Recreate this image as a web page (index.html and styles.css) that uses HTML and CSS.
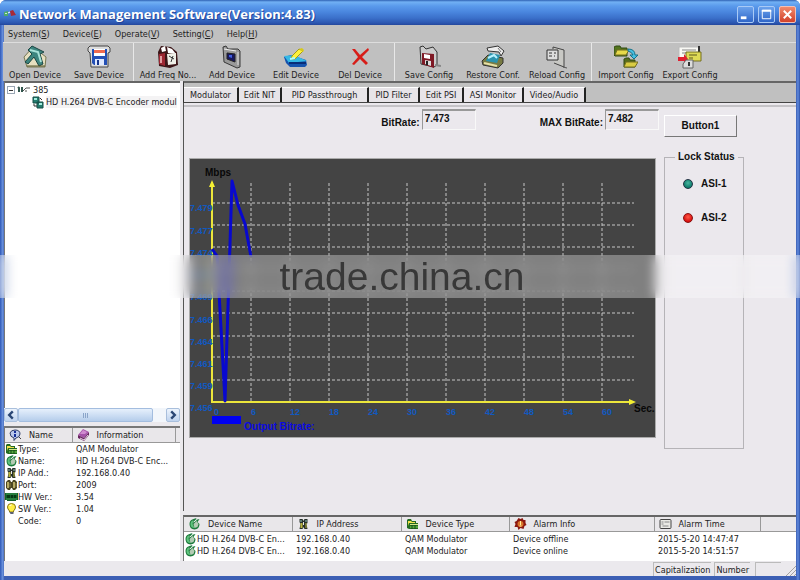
FILE: index.html
```html
<!DOCTYPE html>
<html lang="en">
<head>
<meta charset="utf-8">
<title>Network Management Software(Version:4.83)</title>
<link rel="stylesheet" href="styles.css">
</head>
<body>
<svg class="defs" aria-hidden="true">
  <symbol id="leaf" viewBox="0 0 12 12"><path d="M1 6Q1 2 5 1L8 0 7 2 11 1 9 4 11 6Q11 11 6 11.500Q1 11 1 6Z" fill="#1d7a3c"/><path d="M2 6Q2 3 5 2L4 6 6 10Q2 10 2 6Z" fill="#5fc27d"/><path d="M5 6L8 3 10 6 9 9 6 10Z" fill="#b5cbb5"/><path d="M5 4L8 2" stroke="#fff"/></symbol>
  <symbol id="hosts" viewBox="0 0 12 12"><path d="M2 1H5L6 3 7 1H10V5L9 6 10 11H7L6 9 5 11H2L3 6 2 4Z" fill="#26302a"/><path d="M3 2H4V4H3ZM8 2H9V4H8Z" fill="#8fc0b4"/><path d="M3 5H5V10H3ZM8 5H9V10H8Z" fill="#b9b43c"/><path d="M6 4V7" stroke="#e8e8e8"/></symbol>
  <symbol id="folder" viewBox="0 0 13 12"><path d="M1 10V2L2 1H5L6 3H10V5H12V11H3Z" fill="#246b22"/><path d="M2 3H5L6 4H9V5H3L2 8Z" fill="#f2e04a"/><path d="M4 6H12V7H4Z" fill="#d5e68a"/><path d="M4 8H12V10H4Z" fill="#55a53c"/><path d="M6 7V11M9 7V11" stroke="#174d18"/></symbol>
  <symbol id="plug" viewBox="0 0 13 12"><path d="M1 3L3 1H5L6 3H7L8 1H10L12 3V9L10 11H8L7 9H6L5 11H3L1 9Z" fill="#4c4522"/><path d="M2 3H4V9H2ZM8 3H10V9H8Z" fill="#b6aa63"/><path d="M5 4V8M11 4V8" stroke="#8c8245"/></symbol>
  <symbol id="board" viewBox="0 0 13 12"><path d="M0 2H13V9H11V10H2V9H0Z" fill="#12602a"/><path d="M2 4H5V7H2ZM6 4H8V7H6ZM9 4H11V7H9Z" fill="#063713"/><path d="M1 3H12M1 8H12" stroke="#3e9b50"/></symbol>
  <symbol id="bulb" viewBox="0 0 12 12"><path d="M6 .5Q10 .5 10 4Q10 6 8 8V9H4V8Q2 6 2 4Q2 .5 6 .5Z" fill="#ffee45" stroke="#8b7a14"/><path d="M4 3Q4 2 6 2" stroke="#fff" fill="none"/><path d="M4 9H8V11H5Z" fill="#5c6272"/></symbol>
  <symbol id="info" viewBox="0 0 13 12"><path d="M1 4Q2 1 6 1Q11 1 11 5Q11 8 7 9L5 11.500 5 9Q1 8 1 4Z" fill="#b9c7ea" stroke="#303d68"/><path d="M6 2V4M6 5V8" stroke="#142d98" stroke-width="2"/><path d="M10 8L12 10" stroke="#444"/></symbol>
  <symbol id="book" viewBox="0 0 13 12"><path d="M1 6L6 0 12 3 7 9Z" fill="#a553a9"/><path d="M3 5L6 1 10 3 8 5Z" fill="#d08bd0"/><path d="M1 6L7 9 12 3V6L7 12 1 9Z" fill="#68245f"/><path d="M3 9L7 11 11 6" stroke="#eadce9" fill="none"/></symbol>
  <symbol id="alert" viewBox="0 0 12 12"><path d="M4 0L6 1 8 0 9 2 11 2 11 5 12 7 10 8 9 11 6 10 4 12 3 9 0 9 1 6 0 4 2 3Z" fill="#8a1710"/><circle cx="6" cy="6" r="3" fill="#d9742a"/><path d="M6 3V7M5 8H7" stroke="#fff099"/></symbol>
  <symbol id="card" viewBox="0 0 12 12"><rect x=".5" y="1.500" width="11" height="9" rx="1" fill="#e9e9e4" stroke="#444"/><path d="M2 4H4M5 4H10M2 6H4M3 8H9" stroke="#888"/></symbol>
</svg>

<div class="window">
  <header class="titlebar">
    <svg class="app-icon" viewBox="0 0 12 10" aria-hidden="true"><path d="M0 3L4 2V7H0Z" fill="#4ea96b"/><path d="M1 4H3V5H1Z" fill="#c5ecd1"/><path d="M6 2L9 1 12 6 7 7Z" fill="#a92a37"/><path d="M4 4L6 3" stroke="#fff"/></svg>
    <h1>Network Management Software(Version:4.83)</h1>
    <div class="caption-buttons">
      <button type="button" aria-label="Minimize"><svg viewBox="0 0 16 16"><path d="M3 11.500H9" stroke="#fff" stroke-width="3"/></svg></button>
      <button type="button" aria-label="Maximize"><svg viewBox="0 0 16 16"><path d="M3.500 3.500H12.500V12.500H3.500Z" stroke="#fff" fill="none"/><path d="M3 4H13" stroke="#fff" stroke-width="2"/></svg></button>
      <button type="button" class="close" aria-label="Close"><svg viewBox="0 0 16 16"><path d="M4 4L12 12M12 4L4 12" stroke="#fff" stroke-width="2"/></svg></button>
    </div>
  </header>

  <nav class="menubar">
    <button type="button">System(<u>S</u>)</button>
    <button type="button">Device(<u>E</u>)</button>
    <button type="button">Operate(<u>V</u>)</button>
    <button type="button">Setting(<u>C</u>)</button>
    <button type="button">Help(<u>H</u>)</button>
  </nav>

  <div class="toolbar">
    <button type="button"><svg viewBox="0 0 24 24"><path d="M1 12L10 2 23 12 22 22H4Z" fill="#e6dfc0" stroke="#777752"/><path d="M5 5L9 1 21 7 17 9 20 19 16 21 11 12 5 19 2 17 9 9Z" fill="#3d857f" stroke="#1b4644"/><path d="M7 5L15 7 18 17" stroke="#a9e1d8" stroke-width="2" fill="none"/><path d="M4 21H22" stroke="#55552b"/></svg>Open Device</button>
    <button type="button"><svg viewBox="0 0 24 24"><path d="M1 3L3 1H21L23 3V7L21 8V22H4L3 8 1 6Z" fill="#ddd" stroke="#444"/><path d="M5 4H20V20H7L5 18Z" fill="#2450b5"/><path d="M7 4H18V11H7Z" fill="#fff"/><path d="M7 5H18V8H7Z" fill="#f06b4f"/><path d="M8 14H17V20H8Z" fill="#dfe9ff"/><path d="M10 15H12V20H10Z" fill="#16358c"/></svg>Save Device</button>
    <span class="separator"></span>
    <button type="button"><svg viewBox="0 0 24 24"><path d="M2 7L5 1 15 2 21 7 22 20 14 23 3 21Z" fill="#3b1517"/><path d="M5 3L9 1 10 6 6 7ZM11 2L16 4 20 9 12 8Z" fill="#fff"/><path d="M11 9L20 8 20 19 12 20Z" fill="#efefe7"/><path d="M3 9L9 8 9 21 3 19Z" fill="#9c2631"/><path d="M5 11V18" stroke="#df9da0" stroke-width="2"/><path d="M13 11L18 14M17 11L15 17" stroke="#333"/></svg>Add Freq No...</button>
    <button type="button"><svg viewBox="0 0 24 24"><path d="M3 2L6 1 8 4 18 4 20 6V22L17 23 4 17Z" fill="#999" stroke="#383838"/><path d="M7 8L15 9V17L7 14Z" fill="#17175e" stroke="#222"/><path d="M9 10L12 10V13L9 12Z" fill="#3f5ee0"/><path d="M18 7V20" stroke="#ddd"/><path d="M4 4L16 6" stroke="#eee"/></svg>Add Device</button>
    <button type="button"><svg viewBox="0 0 24 24"><path d="M0 12L7 10 22 15 23 20 21 22 6 22 2 18Z" fill="#1553ae"/><path d="M0 11L10 10 23 16 5 18Z" fill="#35b9e5"/><path d="M5 18H22" stroke="#082d78" stroke-width="2"/><path d="M8 11L15 4 19 6 11 14 7 14Z" fill="#fff13b" stroke="#a49b19"/><path d="M15 4L18 3 20 5 19 7Z" fill="#d6c91b"/><path d="M6 14L11 13" stroke="#aafaff" stroke-width="2"/></svg>Edit Device</button>
    <button type="button"><svg viewBox="0 0 24 24"><path d="M4 4L7 4 12 10 20 3 21 5 14 12 20 18 18 20 12 14 6 20 4 19 10 12Z" fill="#d71d18"/></svg>Del Device</button>
    <span class="separator"></span>
    <button type="button"><svg viewBox="0 0 24 24"><path d="M3 2L6 1 9 4 16 2 20 7V20L17 22 4 19Z" fill="#ccc" stroke="#333"/><path d="M5 8L17 9V23L5 19Z" fill="#7f1925"/><path d="M7 9L13 10V14L7 13Z" fill="#fff"/><path d="M8 15L14 16V21L8 19Z" fill="#ddd"/><path d="M10 16V20" stroke="#222" stroke-width="2"/><path d="M18 20L24 21" stroke="#888" stroke-width="2"/></svg>Save Config</button>
    <button type="button"><svg viewBox="0 0 24 24"><path d="M6 3L17 1 23 6 20 11 18 7 7 6Z" fill="#eee" stroke="#333"/><path d="M17 3L20 7" fill="none" stroke="#777"/><path d="M1 16L7 10 22 13 22 18 17 23 2 20Z" fill="#777a43" stroke="#333"/><path d="M6 14L9 8 19 10 16 18 5 16Z" fill="#2b93ae"/><path d="M7 13L13 10 16 13" stroke="#b7f2ff" stroke-width="2" fill="none"/><path d="M3 18L16 21" stroke="#e7e0a6" stroke-width="2"/></svg>Restore Conf.</button>
    <button type="button"><svg viewBox="0 0 24 24"><path d="M8 4V2L19 5V22L9 18" fill="#c8c8c4" stroke="#444"/><path d="M2 5H13V15H2Z" fill="#ddd" stroke="#333"/><path d="M4 8H7M9 8H11M4 11H7M9 11H10" stroke="#333"/><path d="M18 22L22 23" stroke="#555"/></svg>Reload Config</button>
    <span class="separator"></span>
    <button type="button"><svg viewBox="0 0 24 24"><path d="M0 10V2L2 1H6L7 3H13V11H1Z" fill="#54751e" stroke="#304b13"/><path d="M3 5H15L12 10H1Z" fill="#e7da4b" stroke="#746e20"/><path d="M10 22V14L12 13H15L16 15H21V22Z" fill="#566d1c" stroke="#304b13"/><path d="M12 17H24L21 22H10Z" fill="#d9cc42" stroke="#746e20"/><path d="M14 4Q21 4 21 10H24L20 14 16 10H19Q18 7 14 6Z" fill="#47bfe2" stroke="#167289"/></svg>Import Config</button>
    <button type="button"><svg viewBox="0 0 24 24"><path d="M1 2H22V13H1Z" fill="#f8f8f4" stroke="#bbb"/><path d="M4 5H18M4 8H9" stroke="#888"/><path d="M21 1V16" stroke="#333" stroke-width="2"/><path d="M8 7H23V16H8Z" fill="#dfda55" stroke="#746f20"/><path d="M11 10H19M11 13H15" stroke="#5b5721"/><path d="M0 12H6V9L10 14 6 19V16H0Z" fill="#e02030"/><path d="M8 15H15V23H5V19Z" fill="#ddd" stroke="#666"/><path d="M11 17V21" stroke="#333" stroke-width="2"/></svg>Export Config</button>
  </div>

  <main class="workspace">
    <aside class="sidebar">
      <div class="tree">
        <ul>
          <li class="root"><button type="button" class="expander" aria-label="Collapse 385"></button>
            <svg viewBox="0 0 14 10" aria-hidden="true"><path d="M1 2L2 3V7M5 2V7" stroke="#31564d" stroke-width="2" fill="none"/><path d="M6 6L9 3H13M8 6H10" stroke="#555" fill="none"/></svg><span>385</span></li>
          <li class="leaf"><svg viewBox="0 0 12 13" aria-hidden="true"><path d="M1 1H7V7H1ZM5 6H11V12H5Z" fill="#247c6e" stroke="#164d46"/><path d="M2 3H5M7 8H10" stroke="#a3eee0" stroke-width="2"/><path d="M2 8V10H5M8 2L10 4" stroke="#333" fill="none"/></svg><span>HD H.264 DVB-C Encoder modul</span></li>
        </ul>
      </div>
      <div class="scrollbar">
        <button type="button" aria-label="Scroll left"><svg viewBox="0 0 10 10"><path d="M6.500 2L3.500 5L6.500 8" /></svg></button>
        <div class="track"><div class="thumb"><i></i><i></i><i></i></div></div>
        <button type="button" aria-label="Scroll right"><svg viewBox="0 0 10 10"><path d="M3.500 2L6.500 5L3.500 8" /></svg></button>
      </div>
      <div class="details">
        <table>
          <colgroup><col class="c-key"><col class="c-val"><col></colgroup>
          <thead><tr><th><span><svg><use href="#info"/></svg>Name</span></th><th><span><svg><use href="#book"/></svg>Information</span></th><th></th></tr></thead>
          <tbody>
            <tr><td><span><svg><use href="#folder"/></svg>Type:</span></td><td>QAM Modulator</td><td></td></tr>
            <tr><td><span><svg><use href="#leaf"/></svg>Name:</span></td><td>HD H.264 DVB-C Enc...</td><td></td></tr>
            <tr><td><span><svg><use href="#hosts"/></svg>IP Add.:</span></td><td>192.168.0.40</td><td></td></tr>
            <tr><td><span><svg><use href="#plug"/></svg>Port:</span></td><td>2009</td><td></td></tr>
            <tr><td><span><svg><use href="#board"/></svg>HW Ver.:</span></td><td>3.54</td><td></td></tr>
            <tr><td><span><svg><use href="#bulb"/></svg>SW Ver.:</span></td><td>1.04</td><td></td></tr>
            <tr><td><span><svg></svg>Code:</span></td><td>0</td><td></td></tr>
          </tbody>
        </table>
      </div>
    </aside>

    <section class="content">
      <div class="tabs" role="tablist">
        <button type="button" role="tab">Modulator</button>
        <button type="button" role="tab">Edit NIT</button>
        <button type="button" role="tab">PID Passthrough</button>
        <button type="button" role="tab">PID Filter</button>
        <button type="button" role="tab">Edit PSI</button>
        <button type="button" role="tab" aria-selected="true">ASI Monitor</button>
        <button type="button" role="tab">Video/Audio</button>
      </div>
      <div class="page" role="tabpanel">
        <form class="rates">
          <div class="fields">
            <div class="field"><label for="rate">BitRate:</label><input id="rate" type="text" value="7.473" readonly></div>
            <div class="field"><label for="max-rate">MAX BitRate:</label><input id="max-rate" type="text" value="7.482" readonly></div>
          </div>
          <button type="button" class="push">Button1</button>
        </form>
        <div class="monitor">
          <svg class="chart" viewBox="189 158 467 280" role="img" aria-label="Output bitrate in Mbps over seconds">
            <path class="grid" d="M212 203H634M212 225H634M212 247H634M212 269H634M212 291H634M212 313H634M212 336H634M212 357H634M212 380H634"/>
            <path class="grid" d="M251 183V402M290 183V402M329 183V402M368 183V402M407 183V402M446 183V402M485 183V402M524 183V402M563 183V402M602 183V402"/>
            <path class="axis" d="M212 184V402H632"/>
            <path class="arrow" d="M212 180L215 187H209ZM636 402L629 399V405Z"/>
            <g class="ticks">
              <text x="190" y="211">7.479</text><text x="190" y="234">7.477</text><text x="190" y="256">7.474</text><text x="190" y="278">7.471</text><text x="190" y="300">7.469</text><text x="190" y="323">7.466</text><text x="190" y="345">7.464</text><text x="190" y="367">7.461</text><text x="190" y="389">7.459</text><text x="190" y="411">7.456</text>
              <text x="214" y="415">0</text><text x="251" y="415">6</text><text x="290" y="415">12</text><text x="329" y="415">18</text><text x="368" y="415">24</text><text x="407" y="415">30</text><text x="446" y="415">36</text><text x="485" y="415">42</text><text x="524" y="415">48</text><text x="563" y="415">54</text><text x="602" y="415">60</text>
            </g>
            <path class="series" d="M212 249L217 256 225 401 232 181 238 205 245 224 251 257"/>
            <rect class="key" x="212" y="416" width="29" height="8"/>
            <text class="key-text" x="244" y="430">Output Bitrate:</text>
            <text class="unit" x="205" y="176">Mbps</text>
            <text class="unit" x="634" y="412">Sec.</text>
          </svg>
          <fieldset class="lock">
            <legend>Lock Status</legend>
            <p><span class="led green"></span>ASI-1</p>
            <p><span class="led red"></span>ASI-2</p>
          </fieldset>
        </div>
      </div>
      <div class="alarms">
        <table>
          <colgroup><col class="c-dev"><col class="c-ip"><col class="c-type"><col class="c-info"><col class="c-time"><col></colgroup>
          <thead><tr>
            <th><span><svg><use href="#leaf"/></svg>Device Name</span></th>
            <th><span><svg><use href="#hosts"/></svg>IP Address</span></th>
            <th><span><svg><use href="#folder"/></svg>Device Type</span></th>
            <th><span><svg><use href="#alert"/></svg>Alarm Info</span></th>
            <th><span><svg><use href="#card"/></svg>Alarm Time</span></th>
            <th></th>
          </tr></thead>
          <tbody>
            <tr><td><span><svg><use href="#leaf"/></svg>HD H.264 DVB-C En...</span></td><td>192.168.0.40</td><td>QAM Modulator</td><td>Device offline</td><td>2015-5-20 14:47:47</td><td></td></tr>
            <tr><td><span><svg><use href="#leaf"/></svg>HD H.264 DVB-C En...</span></td><td>192.168.0.40</td><td>QAM Modulator</td><td>Device online</td><td>2015-5-20 14:51:57</td><td></td></tr>
          </tbody>
        </table>
      </div>
    </section>
  </main>

  <footer class="statusbar">
    <span>Capitalization</span><span>Number</span><span class="blank"></span>
    <svg class="grip" viewBox="0 0 12 12" aria-hidden="true"><path d="M2 12L12 2M6 12L12 6M10 12L12 10" stroke="#a4a2a0"/></svg>
  </footer>
  <div class="watermark">trade.china.cn</div>
</div>
</body>
</html>
```
FILE: styles.css
```css
* { box-sizing: border-box; }

body {
  margin: 0;
  background: #fff;
  color: #222;
  font: 9px/12px "DejaVu Sans Condensed", "DejaVu Sans", sans-serif;
}

button, input {
  margin: 0;
  padding: 0;
  border: 0;
  background: none;
  color: inherit;
  font: inherit;
}

.defs { display: none; }
svg { flex: none; }

.window {
  position: relative;
  display: flex;
  flex-direction: column;
  min-height: 100vh;
  padding: 0 4px 4px;
  border-radius: 6px 6px 0 0;
  background: linear-gradient(90deg, #2f58b8, #6f97e0 3px, #3c5fb4 4px, #3c5fb4 calc(100% - 4px), #5f89dc calc(100% - 2px), #2c50a8);
  overflow: hidden;
}

.titlebar {
  display: flex;
  align-items: center;
  height: 25px;
  margin: 0 -4px;
  padding: 3px 4px 0;
  background: linear-gradient(#2f62b4, #71b0f4 2px, #5a9aec 6px, #4a86de 12px, #3b70ca 18px, #2b56b0 23px, #24479c);
  color: #fff;
}
.app-icon { width: 12px; height: 10px; }
.titlebar h1 {
  flex: 1;
  margin: 0 0 0 3px;
  font: bold 13px/18px "Open Sans", "Noto Sans", sans-serif;
  text-shadow: 1px 1px #23459a;
}
.caption-buttons { display: flex; gap: 4px; }
.caption-buttons button {
  width: 17px;
  height: 17px;
  border: 1px solid #a9caf6;
  border-radius: 2px;
  background: linear-gradient(#6ba2ec, #2f66c8);
}
.caption-buttons svg { display: block; width: 15px; height: 15px; }
.caption-buttons .close { background: linear-gradient(#f08a6c, #d2412a); border-color: #f3c0b4; }

.menubar {
  display: flex;
  gap: 13px;
  height: 17px;
  padding: 1px 4px 0;
  background: #c0c0c0;
}
.menubar button { line-height: 14px; }

.toolbar {
  display: flex;
  height: 39px;
  background: #c0c0c0;
  border-top: 1px solid #ddd;
  margin-left: -1px;
}
.toolbar button {
  display: flex;
  flex-direction: column;
  align-items: center;
  width: 64px;
  padding-top: 2px;
  white-space: nowrap;
}
.toolbar svg { width: 24px; height: 24px; }
.separator { width: 1px; margin: 0 2px; background: #e8e8e8; }

.workspace {
  flex: 1;
  display: grid;
  grid-template-columns: 176px minmax(0, 1fr);
  gap: 3px;
  background: #ebe9ed;
}

.sidebar { display: flex; flex-direction: column; min-width: 0; }
.tree {
  flex: 1;
  background: #fff;
  border-top: 2px solid #666;
  border-left: 1px solid #777;
  overflow: hidden;
}
.tree ul { list-style: none; margin: 0; padding: 1px 0 0 2px; }
.tree li { display: flex; align-items: center; height: 12px; white-space: nowrap; }
.tree .root svg { width: 14px; height: 10px; margin: 0 2px; }
.tree .leaf { padding-left: 25px; }
.tree .leaf svg { width: 12px; height: 13px; margin-right: 2px; }
.tree .leaf span { background: #f4f3f4; }
.expander {
  width: 8px;
  height: 8px;
  border: 1px solid #9aa6b4;
  background: linear-gradient(#333, #333) center / 4px 1px no-repeat #fff;
}

.scrollbar { display: flex; height: 14px; background: #f2f6fb; }
.scrollbar button {
  width: 14px;
  border: 1px solid #a9bfdc;
  border-radius: 2px;
  background: linear-gradient(#edf4fd, #bfd3ee);
}
.scrollbar svg { display: block; width: 12px; height: 12px; fill: none; stroke: #2b4775; stroke-width: 2; }
.track { flex: 1; }
.thumb {
  display: flex;
  align-items: center;
  justify-content: center;
  gap: 1px;
  width: 91%;
  height: 14px;
  border: 1px solid #a3bddf;
  border-radius: 2px;
  background: linear-gradient(#e6f0fc, #b5cdeb);
}
.thumb i { width: 1px; height: 5px; background: #8ba5c9; }

table { width: 100%; border-collapse: collapse; table-layout: fixed; }
th, td { height: 12px; padding: 0; text-align: left; white-space: nowrap; overflow: hidden; }
th {
  height: 14px;
  font-weight: normal;
  background: #e9e7ea;
  border-right: 1px solid #999;
  border-bottom: 1px solid #999;
}
th:last-child { border-right: 0; }
th span, td span { display: flex; align-items: center; }
th svg, td svg { width: 13px; height: 12px; }
th svg { margin: 0 7px 0 4px; }
tbody td:not(:first-child) { padding-left: 4px; }

.details {
  height: 135px;
  margin-top: 4px;
  background: #fff;
  border-top: 2px solid #777;
  border-left: 1px solid #777;
}
.c-key { width: 67px; }
.c-val { width: 103px; }
.details tbody tr:first-child td { height: 13px; }

.content { display: flex; flex-direction: column; min-width: 0; }
.tabs {
  display: grid;
  grid-template-columns: 55px 43px 87px 51px 44px 60px 62px;
  height: 22px;
  padding: 4px 0 0;
  background: #c0c0c0;
  border-top: 2px solid #666;
  border-left: 1px solid #333;
  border-bottom: 1px solid #444;
}
.tabs button {
  background: #e7e4e8;
  border-right: 2px solid #222;
  border-top: 1px solid #fff;
  white-space: nowrap;
}
.tabs [aria-selected] { background: #ebe8ed; }
.page {
  flex: 1;
  padding: 0 52px 0 5px;
  background: linear-gradient(#ebe8ed 2px, #c5c3c7 2px, #c5c3c7 4px, #ebe8ed 4px);
  border-left: 1px solid #555;
  font: bold 10px/12px "Liberation Sans", Arial, sans-serif;
  color: #111;
}
.rates { display: flex; gap: 5px; padding-top: 6px; height: 55px; }
.fields { flex: 1; display: flex; justify-content: flex-end; gap: 64px; }
.field { display: flex; gap: 2px; }
.field label { padding-top: 8px; }
.field input {
  width: 54px;
  height: 21px;
  padding: 0 2px 4px;
  border: 1px solid #f8f8f8;
  border-top: 2px solid #999;
  border-left-color: #999;
}
.push {
  width: 73px;
  height: 22px;
  margin: 6px 7px 0 0;
  border: 1px solid #fff;
  border-right-color: #777;
  border-bottom-color: #777;
}

.monitor { display: flex; align-items: flex-start; gap: 8px; }
.chart {
  flex: 1;
  min-width: 0;
  display: block;
  background: #444;
  outline: 1px solid #aaa;
  outline-offset: -1px;
}
.chart path { fill: none; }
.chart .grid { stroke: #c6c6c6; stroke-width: 1; stroke-dasharray: 3 2; }
.chart .axis { stroke: #ece63b; stroke-width: 2; }
.chart .arrow { fill: #f4ef32; }
.chart .series { stroke: #0808cf; stroke-width: 3; stroke-linejoin: round; }
.chart .key { fill: #0000f0; }
.chart text { font-size: 10px; }
.chart .ticks text { font-size: 9px; }
.ticks { fill: #1159c0; }
.key-text { fill: #0a0ae0; }
.unit { fill: #080808; }

.lock {
  width: 80px;
  min-height: 298px;
  margin: -7px 0 0;
  padding: 12px 0 0 18px;
  border: 1px solid #b5b3b7;
  min-inline-size: 0;
}
.lock legend { margin-left: -8px; padding: 0 3px; }
.lock p { display: flex; align-items: center; gap: 8px; height: 18px; margin: 0 0 16px; }
.led { width: 10px; height: 10px; border-radius: 5px; border: 1px solid #234; }
.led.green { background: radial-gradient(circle at 4px 3px, #48b59f, #087565 5px); }
.led.red { background: radial-gradient(circle at 4px 3px, #ff5948, #d40808 5px); border-color: #811; }

.alarms {
  height: 46px;
  margin-top: 4px;
  background: #fff;
  border-top: 2px solid #666;
  border-left: 1px solid #777;
}
.c-dev { width: 108px; }
.c-ip { width: 109px; }
.c-type { width: 108px; }
.c-info { width: 145px; }
.c-time { width: 106px; }
.alarms tbody tr:first-child td { padding-top: 1px; }

.statusbar {
  display: flex;
  justify-content: flex-end;
  gap: 3px;
  height: 15px;
  padding-top: 1px;
  background: #ebe9ed;
}
.statusbar span { padding: 0 1px; border-top: 1px solid #bbb; border-left: 1px solid #bbb; line-height: 14px; }
.statusbar .blank { width: 26px; margin-left: 2px; }
.grip { width: 12px; height: 12px; align-self: flex-end; }

.watermark {
  position: absolute;
  top: 255px;
  left: 0;
  right: 0;
  height: 43px;
  padding-left: 4px;
  background: rgba(255, 255, 255, .32);
  backdrop-filter: blur(6px);
  color: #383838;
  font: 39px/43px "Liberation Sans", Arial, sans-serif;
  text-align: center;
  pointer-events: none;
}
```
